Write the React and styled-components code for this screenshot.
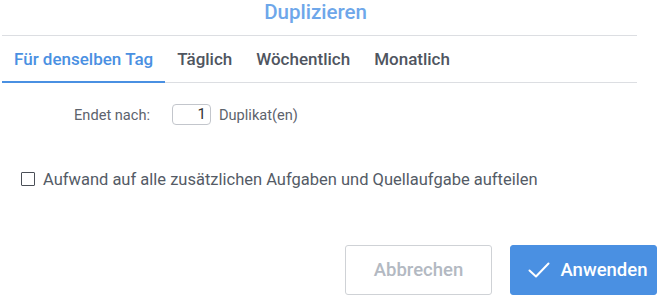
import React, { useState } from "react";
import styled, { createGlobalStyle } from "styled-components";

const Global = createGlobalStyle`
  html, body { margin: 0; padding: 0; background: #fff; }
  body { font-family: Roboto, "Noto Sans", Arial, sans-serif; }
  * { box-sizing: border-box; }
`;

const Dialog = styled.div`
  width: 660px;
  height: 299px;
  overflow: hidden;
  display: flex;
  flex-direction: column;
  padding: 0 3px 0 2px;
`;

const Header = styled.div`
  height: 36px;
  margin-right: 20px;
  padding-right: 8px;
  border-bottom: 1px solid #dcdee2;
  display: flex;
  justify-content: center;
`;

const Title = styled.h1`
  margin: 0;
  font-size: 20.5px;
  line-height: 24px;
  font-weight: 500;
  color: #6ea7ea;
`;

const TabBar = styled.div`
  display: flex;
  margin-right: 20px;
  border-bottom: 1px solid #dcdee2;
`;

const Tab = styled.div`
  padding: 2px 12px 0;
  line-height: 43px;
  font-size: 17px;
  font-weight: 500;
  color: ${(p) => (p.$active ? "#4a90e2" : "#4f5560")};
  border-bottom: 2px solid ${(p) => (p.$active ? "#4a90e2" : "transparent")};
  margin-bottom: -1px;
  cursor: pointer;
  white-space: nowrap;
`;

const FieldRow = styled.div`
  margin-top: 21px;
  display: flex;
  align-items: center;
  height: 21px;
  font-size: 14.6px;
  color: #5d636d;
`;

const Label = styled.span`
  width: 148px;
  text-align: right;
  margin-right: 22px;
`;

const NumberBox = styled.div`
  width: 39px;
  height: 21px;
  border: 1px solid #c3c6cc;
  border-radius: 4px;
  text-align: right;
  padding-right: 4px;
  line-height: 19px;
  font-size: 15px;
  color: #333;
  margin-right: 8px;
`;

const CheckRow = styled.label`
  margin-top: 44px;
  margin-left: 19px;
  display: flex;
  align-items: center;
  height: 20px;
  gap: 8px;
  font-size: 16.5px;
  color: #545b66;
`;

const Box = styled.span`
  width: 14px;
  height: 14px;
  border: 1.5px solid #4a4f57;
  border-radius: 1px;
  flex: none;
`;

const Footer = styled.div`
  margin-top: 56px;
  display: flex;
  justify-content: flex-end;
  gap: 18px;
`;

const Button = styled.button`
  width: 147px;
  height: 50px;
  border-radius: 3px;
  font-family: inherit;
  font-size: 18.5px;
  font-weight: 500;
  display: flex;
  align-items: center;
  justify-content: center;
  gap: 11px;
  cursor: pointer;
  padding: 0 0 0 ${(p) => (p.$primary ? "8px" : "0")};
  border: 1px solid ${(p) => (p.$primary ? "#4a90e2" : "#cfd2d6")};
  background: ${(p) => (p.$primary ? "#4a90e2" : "#fff")};
  color: ${(p) => (p.$primary ? "#fff" : "#b3b9c2")};
`;

const tabs = ["Für denselben Tag", "Täglich", "Wöchentlich", "Monatlich"];

export default function App() {
  const [active, setActive] = useState(0);
  return (
    <>
      <Global />
      <Dialog>
        <Header>
          <Title>Duplizieren</Title>
        </Header>
        <TabBar>
          {tabs.map((t, i) => (
            <Tab key={t} $active={i === active} onClick={() => setActive(i)}>
              {t}
            </Tab>
          ))}
        </TabBar>
        <FieldRow>
          <Label>Endet nach:</Label>
          <NumberBox>1</NumberBox>
          <span>Duplikat(en)</span>
        </FieldRow>
        <CheckRow>
          <Box />
          Aufwand auf alle zusätzlichen Aufgaben und Quellaufgabe aufteilen
        </CheckRow>
        <Footer>
          <Button>Abbrechen</Button>
          <Button $primary>
            <svg width="22" height="16" viewBox="0 0 22 16" fill="none">
              <polyline points="1.5,8.5 8,14.5 20.5,1.5" stroke="#fff" strokeWidth="2" strokeLinecap="round" strokeLinejoin="round" />
            </svg>
            Anwenden
          </Button>
        </Footer>
      </Dialog>
    </>
  );
}
